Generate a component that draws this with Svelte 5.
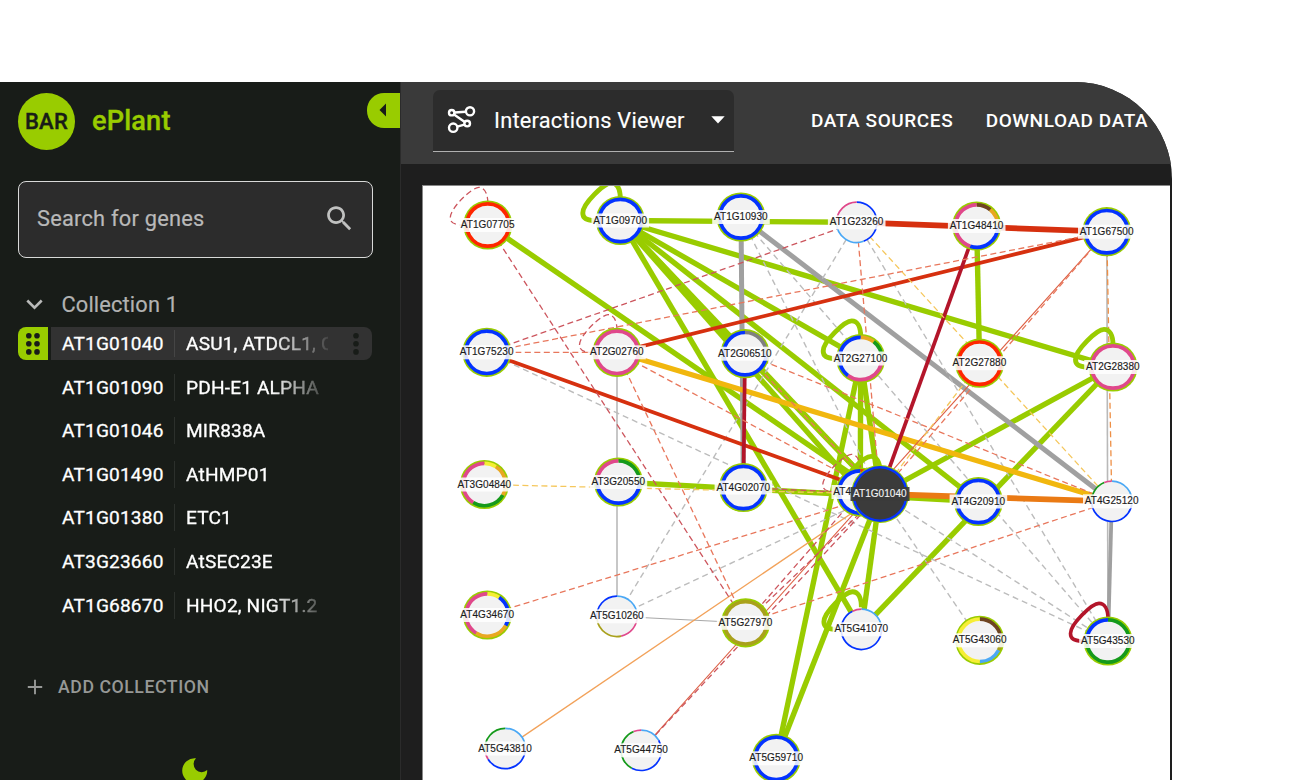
<script>
  const genes = [
    ['AT1G01040', 'ASU1, ATDCL1, CAF'],
    ['AT1G01090', 'PDH-E1 ALPHA'],
    ['AT1G01046', 'MIR838A'],
    ['AT1G01490', 'AtHMP01'],
    ['AT1G01380', 'ETC1'],
    ['AT3G23660', 'AtSEC23E'],
    ['AT1G68670', 'HHO2, NIGT1.2'],
  ];

  const C = {
    lime: '#99cc00', blue: '#0433ff', red: '#ff2600', pink: '#e0488b', sky: '#4aa8f5',
    green: '#159a1b', olive: '#a9a11c', yellow: '#f6ee35', orange: '#e9a722',
    brown: '#6e4420', gray: '#808080', crimson: '#b3152a',
    edgeRed: '#d6300f', edgeGray: '#a0a0a0', edgeOrange: '#ea7a14', gold: '#f1b70e',
  };

  // id, x, y, kind (0 large, 1 small, 2 selected), ring segments as [colour, start degree] pairs
  const nodes = [
    ['AT1G07705', 487.8, 225, 0, [['red', 0]]],
    ['AT1G09700', 620.3, 220.5, 0, [['blue', 0]]],
    ['AT1G10930', 741, 217, 0, [['blue', 0]]],
    ['AT1G23260', 856.7, 222.3, 1, [['blue', 0], ['sky', 160], ['pink', 270]]],
    ['AT1G48410', 976.7, 226, 0, [['brown', 0], ['orange', 40], ['blue', 90], ['pink', 198]]],
    ['AT1G67500', 1106.8, 231.7, 0, [['blue', 0]]],
    ['AT1G75230', 486.8, 352.3, 0, [['blue', 0]]],
    ['AT2G02760', 617, 352.3, 0, [['pink', 0]]],
    ['AT2G06510', 745, 353.7, 0, [['gray', 0], ['blue', 90]]],
    ['AT2G27100', 860.7, 358.5, 0, [['orange', 0], ['green', 38], ['pink', 90], ['blue', 217]]],
    ['AT2G27880', 979.6, 363.2, 0, [['red', 0]]],
    ['AT2G28380', 1113, 367, 0, [['pink', 0]]],
    ['AT3G04840', 484.4, 484.5, 0, [['yellow', 0], ['orange', 33], ['green', 120], ['pink', 212]]],
    ['AT3G20550', 618.4, 482, 0, [['green', 0], ['blue', 90], ['pink', 270]]],
    ['AT4G02070', 743.4, 487.5, 0, [['blue', 0]]],
    ['AT4G', 860.3, 492, 0, [['red', 0], ['blue', 60]]],
    ['AT4G20910', 978.4, 501.5, 0, [['blue', 0]]],
    ['AT4G25120', 1111.8, 501.3, 1, [['sky', 0], ['blue', 100], ['green', 270], ['pink', 338]]],
    ['AT4G34670', 487.3, 615, 0, [['yellow', 0], ['blue', 34], ['orange', 120], ['pink', 212]]],
    ['AT5G10260', 617, 616.3, 1, [['sky', 0], ['pink', 90], ['olive', 168], ['blue', 262]]],
    ['AT5G27970', 745.6, 622.8, 0, [['olive', 0]]],
    ['AT5G41070', 861.4, 629.3, 1, [['sky', 0], ['blue', 80], ['pink', 334]]],
    ['AT5G43060', 979.8, 640.3, 0, [['brown', 0], ['olive', 80], ['sky', 118], ['yellow', 180]]],
    ['AT5G43530', 1108, 641, 0, [['green', 0], ['blue', 275]]],
    ['AT5G43810', 505.2, 748.5, 1, [['sky', 0], ['blue', 90], ['pink', 238], ['green', 262]]],
    ['AT5G44750', 641.2, 750.3, 1, [['sky', 0], ['blue', 60], ['green', 208], ['pink', 338]]],
    ['AT5G59710', 776.3, 758.3, 0, [['blue', 0]]],
    ['AT1G01040', 880, 494, 2, [['blue', 0]]],
  ];
  const at = Object.fromEntries(nodes.map((n) => [n[0], n]));

  // edges grouped by style: colour, width, dash, source>target list
  const groups = [
    [C.lime, 5.4, '', '1G07705>1G01040 1G09700>1G23260 1G09700>2G28380 1G09700>2G27100 1G09700>4G20910 1G09700>2G06510 1G09700>4G 1G09700>1G01040 1G09700>5G41070 2G06510>1G01040 2G28380>5G41070 2G28380>1G01040 1G48410>2G27880 2G27100>4G 2G27100>1G01040 2G27100>5G59710 1G01040>5G59710 1G01040>5G41070 3G20550>4G20910'],
    ['#b9b9b9', 1.6, '', '2G02760>5G10260 1G67500>5G43530'],
    ['#a8a8a8', 1, '', '5G10260>5G27970'],
    [C.edgeGray, 5, '', '1G10930>4G02070 1G10930>4G25120'],
    [C.edgeGray, 3.8, '', '4G25120>5G43530'],
    ['#bcbcbc', 1.4, '6 4', '1G75230>5G43530 1G10930>5G43530 1G10930>1G01040 1G23260>5G43530 1G23260>5G10260 1G01040>5G10260 1G01040>5G43530 1G01040>5G43060'],
    [C.gold, 5.2, '', '2G02760>4G25120'],
    [C.edgeRed, 3.8, '', '1G75230>1G01040 2G02760>1G67500'],
    [C.edgeRed, 5.8, '', '1G23260>1G67500'],
    [C.edgeOrange, 5.8, '', '1G01040>4G25120'],
    [C.crimson, 3.7, '', '1G48410>1G01040 2G06510>4G02070'],
    ['#f2a25a', 1.3, '', '5G43810>1G01040'],
    ['#dd6044', 1.1, '', '1G67500>5G44750'],
    ['#cc555d', 1.3, '6 3.5', '1G07705>5G27970 1G75230>1G23260 1G01040>5G27970 1G01040>5G44750 4G02070>1G01040 4G>5G27970'],
    ['#e8775c', 1.3, '6 3.5', '1G75230>1G67500 1G75230>2G02760 2G02760>5G27970 2G02760>1G01040 2G06510>4G25120 2G06510>1G01040 1G23260>1G01040 4G25120>5G27970 4G34670>1G01040 1G67500>1G01040'],
    ['#f5c75c', 1.3, '6 3.5', '1G23260>4G25120 2G27880>1G01040 3G04840>1G01040'],
    ['#ee8f45', 1.3, '6 3.5', '1G67500>4G25120'],
  ];
  const edges = groups.flatMap(([color, width, dash, list]) =>
    list.split(' ').map((pair) => {
      const [a, b] = pair.split('>').map((k) => at['AT' + k]);
      return { color, width, dash, x1: a[1], y1: a[2], x2: b[1], y2: b[2] };
    })
  );

  const loops = [
    ['AT1G07705', '#cc555d', 1.3, '6 3.5'], ['AT1G09700', C.lime, 4.9, ''],
    ['AT2G02760', '#cc555d', 1.3, '6 3.5'], ['AT2G27100', C.lime, 4.9, ''],
    ['AT2G28380', C.lime, 4.9, ''], ['AT4G', '#cc555d', 1.3, '6 3.5'],
    ['AT1G01040', C.lime, 4.9, ''], ['AT5G41070', C.lime, 4.9, ''],
    ['AT5G43530', C.crimson, 3.6, ''],
  ];

  function arc(r, a, b) {
    const p = (d) => {
      const t = ((d - 90) * Math.PI) / 180;
      return `${(r * Math.cos(t)).toFixed(2)},${(r * Math.sin(t)).toFixed(2)}`;
    };
    return `M${p(a)}A${r},${r} 0 ${b - a > 180 ? 1 : 0} 1 ${p(b)}`;
  }
</script>

<div class="frame">
  <aside>
    <header class="brand">
      <div class="logo">BAR</div>
      <h1>ePlant</h1>
      <button class="collapse" aria-label="Collapse">
        <svg width="8" height="14" viewBox="0 0 8 14"><path d="M7 0.5V13.5L0.5 7z" fill="#181c18" /></svg>
      </button>
    </header>

    <div class="search">
      <span>Search for genes</span>
      <svg width="33" height="33" viewBox="0 0 24 24"><path fill="#c0c1c0" d="M15.5 14h-.79l-.28-.27C15.41 12.59 16 11.11 16 9.5 16 5.91 13.09 3 9.5 3S3 5.91 3 9.5 5.91 16 9.5 16c1.61 0 3.09-.59 4.23-1.57l.27.28v.79l5 4.99L20.49 19l-4.99-5zm-6 0C7.01 14 5 11.99 5 9.5S7.01 5 9.5 5 14 7.01 14 9.5 11.99 14 9.5 14z" /></svg>
    </div>

    <div class="collection">
      <svg width="17" height="11" viewBox="0 0 17 11"><path d="M1.3 1.5L8.5 8.6L15.7 1.5" fill="none" stroke="#b9bab9" stroke-width="2.6" /></svg>
      <span>Collection 1</span>
    </div>

    <div class="genes">
      {#each genes as [id, alias], i}
        <div class="gene" class:active={i === 0}>
          <div class="handle">
            {#if i === 0}
              <svg width="16" height="24" viewBox="0 0 16 24" fill="#181c18">
                {#each [3.7, 11.8, 19.9] as y}
                  <circle cx="3.8" cy={y} r="2.8" /><circle cx="12" cy={y} r="2.8" />
                {/each}
              </svg>
            {/if}
          </div>
          <div class="cell">
            <span class="id">{id}</span>
            <span class="alias">{alias}</span>
            {#if i === 0}
              <svg width="8" height="24" viewBox="0 0 8 24" fill="#181c18">
                {#each [3.7, 11.8, 19.9] as y}<circle cx="4" cy={y} r="2.8" />{/each}
              </svg>
            {/if}
          </div>
        </div>
      {/each}
    </div>

    <div class="add">
      <svg width="16" height="16" viewBox="0 0 16 16"><path d="M8 .8V15.2M.8 8H15.2" stroke="#969896" stroke-width="1.9" /></svg>
      <span>ADD COLLECTION</span>
    </div>

    <div class="theme">
      <svg width="26" height="26" viewBox="0 0 26 26"><path fill="#99cc00" d="M14 .3A12.5 12.5 0 1 0 25.2 12A8.1 8.1 0 0 1 14 .3z" /></svg>
    </div>
  </aside>

  <main>
    <nav>
      <div class="select">
        <svg width="30" height="30" viewBox="0 0 30 30" fill="none" stroke="#fff" stroke-width="2.4">
          <path d="M8.6 7.5L19.6 6.7M8 9.5L18.8 17M18.4 19.6L11.2 21.6" />
          <circle cx="5.7" cy="7.7" r="2.7" />
          <circle cx="24" cy="6.3" r="4.1" />
          <circle cx="21.2" cy="18.6" r="2.8" />
          <circle cx="7.2" cy="22.7" r="4.2" />
        </svg>
        <span>Interactions Viewer</span>
        <svg width="14" height="8" viewBox="0 0 14 8"><path d="M.3 .3H13.7L7 7.4z" fill="#fff" /></svg>
      </div>
      <span class="link">DATA SOURCES</span>
      <span class="link">DOWNLOAD DATA</span>
    </nav>

    <div class="viewer">
      <svg class="graph" width="747" height="594" viewBox="423 186 747 594">
        {#each edges as e}
          <line x1={e.x1} y1={e.y1} x2={e.x2} y2={e.y2} stroke={e.color} stroke-width={e.width} stroke-dasharray={e.dash || null} />
        {/each}
        {#each loops as [id, color, width, dash]}
          <path
            transform="translate({at[id][1]} {at[id][2]})"
            d="M0 -22C0 -32 -3.5 -37.6 -9 -37.6C-16 -37.6 -37.5 -17 -37.5 -7.5C-37.5 -2 -34 -.6 -26 .2"
            fill="none" stroke={color} stroke-width={width} stroke-dasharray={dash || null}
          />
        {/each}
        {#each nodes as [id, x, y, kind, ring]}
          <g transform="translate({x} {y})">
            {#if kind === 0}
              <circle r="24.6" fill={C.lime} />
            {:else if kind === 2}
              <circle r="29" fill={C.lime} />
              <circle r="27.9" fill={C.blue} />
            {/if}
            {#if kind === 2}
              <circle r="25.4" fill="#3b3b3b" />
              <rect x="-29.5" y="-7" width="59" height="14" fill="#3b3b3b" opacity=".9" />
            {:else}
              <circle r="20.4" fill="#f2f2f2" />
              {#each ring as [color, start], i}
                {@const end = i + 1 < ring.length ? ring[i + 1][1] : 359.9}
                <path d={arc(kind ? 20.2 : 21.2, start, end)} fill="none" stroke={C[color]} stroke-width={kind ? 1.7 : 3.7} />
              {/each}
              <rect x="-28.8" y="-7" width="57.6" height="14" fill="#fff" opacity=".86" />
            {/if}
            <text class:dark={kind === 2} x="-27" y="3.1">{id}</text>
          </g>
        {/each}
      </svg>
    </div>
  </main>
</div>

<style>
  :global(body) { background: #fff; overflow: hidden; }
  .frame {
    display: flex;
    width: 1172px;
    height: 698px;
    margin-top: 82px;
    box-sizing: border-box;
    overflow: hidden;
    border-top-right-radius: 97px;
    background: #1e1e1e;
    font-family: Roboto, sans-serif;
    color: #fff;
  }
  aside {
    display: flex;
    flex-direction: column;
    flex: none;
    width: 401px;
    box-sizing: border-box;
    border-right: 1px solid #2b2b2b;
    background: #181c18;
  }
  aside > * { flex: none; }
  .brand { display: flex; align-items: center; height: 57px; padding: 11px 0 0 18px; }
  .logo {
    display: flex;
    align-items: center;
    justify-content: center;
    width: 57px;
    height: 57px;
    border-radius: 50%;
    background: #99cc00;
    color: #181c18;
    font-size: 22px;
    font-weight: 500;
    letter-spacing: .3px;
    -webkit-text-stroke: .4px #181c18;
  }
  h1 { margin: 0 0 1px 17px; font-size: 27.2px; font-weight: 500; letter-spacing: .15px; color: #99cc00; line-height: 32px; -webkit-text-stroke: .35px #99cc00; }
  .collapse {
    display: flex;
    align-items: center;
    align-self: flex-start;
    width: 33px;
    height: 35px;
    margin-left: auto;
    padding: 0 0 2px 12px;
    box-sizing: border-box;
    border: 0;
    border-radius: 17px 0 0 17px;
    background: #99cc00;
  }
  .search {
    display: flex;
    align-items: center;
    justify-content: space-between;
    height: 77px;
    width: 355px;
    margin: 31px 0 0 18px;
    padding: 0 16px 2px 18px;
    box-sizing: border-box;
    border: 1px solid #d8d9d8;
    border-radius: 8px;
    background: #2c2c2c;
    color: #b9b9b9;
    font-size: 21.8px;
    letter-spacing: .23px;
    -webkit-text-stroke: .2px #b9b9b9;
  }
  .collection {
    display: flex;
    align-items: center;
    gap: 18.5px;
    height: 30px;
    margin: 31px 0 0 26px;
    color: #b2b3b2;
    font-size: 21.8px;
    letter-spacing: .15px;
    -webkit-text-stroke: .2px #b2b3b2;
  }
  .genes { display: flex; flex-direction: column; gap: 10.6px; margin: 8px 0 0 18px; }
  .gene { display: flex; gap: 3px; width: 354px; height: 33px; }
  .handle { display: flex; align-items: center; justify-content: center; width: 30px; border-radius: 8px 0 0 8px; }
  .cell {
    display: flex;
    align-items: center;
    flex: 1;
    padding: 0 12px 0 11px;
    border-radius: 0 8px 8px 0;
    font-size: 19.1px;
    letter-spacing: .17px;
    -webkit-text-stroke: .3px #fff;
  }
  .cell svg { -webkit-text-stroke: 0; }
  .active .handle { background: #99cc00; }
  .active .cell { background: #323232; }
  .id { width: 112px; line-height: 27px; border-right: 1px solid #2c302c; }
  .active .id { border-color: #454545; }
  .alias {
    width: 142px;
    margin-left: 11px;
    overflow: hidden;
    white-space: nowrap;
    -webkit-mask-image: linear-gradient(90deg, #000 60%, rgba(0, 0, 0, .1));
    mask-image: linear-gradient(90deg, #000 60%, rgba(0, 0, 0, .1));
  }
  .cell svg { margin-left: auto; }
  .add { display: flex; align-items: center; gap: 15px; height: 24px; margin: 53px 0 0 27px; color: #969896; font-size: 17.7px; font-weight: 500; letter-spacing: .55px; }
  .theme { display: flex; justify-content: center; margin: 59px 10px 0 0; }
  main { display: flex; flex-direction: column; flex: 1; }
  nav { display: flex; align-items: center; flex: none; height: 82px; padding: 0 0 0 32px; background: #3a3a3a; white-space: nowrap; box-sizing: border-box; }
  .select {
    display: flex;
    align-items: center;
    flex: none;
    width: 301px;
    height: 62px;
    margin: 0 44px 5px 0;
    padding: 0 9.5px 0 13px;
    box-sizing: border-box;
    border-bottom: 1px solid #b0b0b0;
    border-radius: 7px 7px 0 0;
    background: #2c2c2c;
    font-size: 21.8px;
    letter-spacing: .22px;
  }
  .select span { margin: 1px 0 0 18px; flex: 1; -webkit-text-stroke: .15px #fff; }
  .link { margin: 0 0 6px 33px; font-size: 19px; font-weight: 500; letter-spacing: .58px; }
  .link + .link { margin-left: 32.4px; }
  .viewer { flex: 1; padding: 21px 0 0 21px; overflow: hidden; }
  .graph { display: block; background: #fff; border: solid #888; border-width: 1px 0 0 1px; }
  .graph text { font: 10px "Liberation Sans", Arial, sans-serif; letter-spacing: .06px; fill: #1c1c1c; stroke: #1c1c1c; stroke-width: .15px; }
  .graph text.dark { fill: #f2f2f2; stroke: #f2f2f2; }
</style>
